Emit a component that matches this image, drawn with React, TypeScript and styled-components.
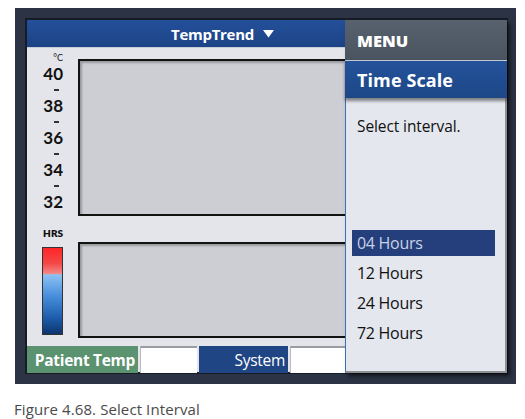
import React from 'react';
import styled, { createGlobalStyle } from 'styled-components';

const GlobalStyle = createGlobalStyle`
   html, body {
      margin: 0;
      padding: 0;
      background: #ffffff;
      font-family: "Open Sans", "Noto Sans", sans-serif;
   }
`;

const Page = styled.div`
   width: 525px;
   height: 419px;
   padding: 8px 0 0 15px;
   box-sizing: border-box;
`;

const Frame = styled.div`
   position: relative;
   width: 501px;
   height: 376px;
   box-sizing: border-box;
   padding: 10px 8px 10px 10px;
   background: #2c3344;
`;

const Screen = styled.div`
   height: 100%;
   box-sizing: border-box;
   border: 2px solid #161b26;
   background: #e3e5ea;
   display: flex;
   flex-direction: column;
`;

const Header = styled.div`
   height: 27px;
   flex-shrink: 0;
   background: linear-gradient(#24509a, #1c4386);
   display: flex;
   align-items: center;
   justify-content: center;
   padding-right: 88px;
   gap: 9px;
   color: #fff;
   font-weight: 700;
   font-size: 15px;
   letter-spacing: -0.3px;
   border-bottom: 1px solid #c8ccd6;
`;

const Body = styled.div`
   flex: 1;
   display: flex;
   flex-direction: column;
   padding-top: 6px;
   gap: 9px;
`;

const Row = styled.div`
   display: flex;
`;

const Scale = styled.div`
   width: 51px;
   flex-shrink: 0;
   box-sizing: border-box;
   padding-right: 15px;
   display: flex;
   flex-direction: column;
   align-items: flex-end;
   color: #111;
   font-family: Lato, "Open Sans", sans-serif;
   font-weight: 700;
`;

const Unit = styled.div`
   height: 10px;
   line-height: 10px;
   margin-top: -1px;
   margin-bottom: 3px;
   font-size: 9px;
   font-weight: 400;
`;

const Tick = styled.div`
   height: 16px;
   line-height: 16px;
   font-size: 17px;
   font-weight: 700;
`;

const Dash = styled.div`
   height: 16px;
   width: 14px;
   display: flex;
   align-items: center;
   justify-content: center;

   &::after {
      content: '';
      width: 5px;
      height: 1.5px;
      background: #333;
   }
`;

const HrsLabel = styled.div`
   height: 14px;
   line-height: 14px;
   font-size: 10px;
   font-weight: 800;
   margin-top: 1px;
`;

const ColorBar = styled.div`
   width: 21px;
   height: 88px;
   margin-top: 7px;
   box-sizing: border-box;
   border: 1px solid #333;
   background: linear-gradient(
      #ff2626 0%,
      #f44848 18%,
      #f48a8a 30%,
      #8ec2f4 31%,
      #4a90dc 55%,
      #1f5fae 80%,
      #0b356f 100%
   );
`;

const Chart = styled.div<{ $height: number; $top: number }>`
   flex: 1;
   height: ${(p) => p.$height}px;
   margin-top: ${(p) => p.$top}px;
   box-sizing: border-box;
   border: 2px solid #121212;
   background: #ccced4;
   box-shadow: inset 2px 2px 2px rgba(0, 0, 0, 0.25);
`;

const Footer = styled.div`
   height: 27px;
   flex-shrink: 0;
   display: flex;
   gap: 2px;
   margin-top: 8px;
`;

const Tab = styled.div<{ $bg: string; $width: number; $bold?: boolean }>`
   width: ${(p) => p.$width}px;
   box-sizing: border-box;
   background: ${(p) => p.$bg};
   color: #fff;
   font-size: 15.5px;
   font-weight: ${(p) => (p.$bold ? 700 : 400)};
   letter-spacing: -0.3px;
   display: flex;
   align-items: center;
   justify-content: flex-end;
   padding-right: 3px;
`;

const Blank = styled.div<{ $width: number }>`
   width: ${(p) => p.$width}px;
   background: #ffffff;
   border-top: 2px solid #9a9ca2;
   border-left: 1px solid #b9bbc0;
`;

const Menu = styled.div`
   position: absolute;
   left: 330px;
   top: 12px;
   width: 162px;
   height: 353px;
   display: flex;
   flex-direction: column;
   box-shadow: 3px 3px 4px rgba(0, 0, 0, 0.6);
`;

const MenuTitle = styled.div`
   height: 40px;
   flex-shrink: 0;
   box-sizing: border-box;
   padding-left: 12px;
   display: flex;
   align-items: center;
   background: linear-gradient(#58626f, #4a5461);
   color: #fff;
   font-weight: 800;
   font-size: 16.5px;
`;

const MenuSection = styled.div`
   height: 38px;
   flex-shrink: 0;
   box-sizing: border-box;
   padding-left: 12px;
   display: flex;
   align-items: center;
   border-top: 1px solid #c2c8d2;
   background: linear-gradient(#24529a, #1d4787);
   color: #fff;
   font-weight: 700;
   font-size: 18px;
   letter-spacing: 0.1px;
   box-shadow: 0 3px 3px rgba(0, 0, 0, 0.45);
   position: relative;
`;

const MenuBody = styled.div`
   flex: 1;
   box-sizing: border-box;
   background: #e4e7ee;
   border-left: 1px solid #3d6fb3;
   border-right: 2px solid #8e9096;
   border-bottom: 2px solid #8e9096;
   padding: 17px 10px 0 6px;
   color: #111;
`;

const Prompt = styled.div`
   padding-left: 5px;
   font-size: 15.5px;
   line-height: 22px;
   letter-spacing: -0.1px;
`;

const Options = styled.div`
   margin-top: 93px;
   display: flex;
   flex-direction: column;
   gap: 4px;
`;

const Option = styled.div<{ $active?: boolean }>`
   height: 26px;
   line-height: 26px;
   padding-left: 5px;
   font-size: 16px;
   letter-spacing: -0.3px;
   background: ${(p) => (p.$active ? '#243f7c' : 'transparent')};
   color: ${(p) => (p.$active ? '#c9d2e4' : '#111')};
`;

const Caption = styled.div`
   margin-top: 15px;
   margin-left: -1px;
   font-size: 15px;
   color: #4a4a4a;
   font-weight: 400;
   letter-spacing: 0.1px;
`;

const ticks = ['40', '38', '36', '34', '32'];
const intervals = ['04 Hours', '12 Hours', '24 Hours', '72 Hours'];

const App: React.FC = () => {
   return (
      <Page>
         <GlobalStyle />
         <Frame>
            <Screen>
               <Header>
                  <span>TempTrend</span>
                  <svg width="11" height="8" viewBox="0 0 11 8">
                     <path d="M0 0 H11 L5.5 7.5 Z" fill="#fff" />
                  </svg>
               </Header>
               <Body>
                  <Row>
                     <Scale>
                        <Unit>°C</Unit>
                        {ticks.map((t, i) => (
                           <React.Fragment key={t}>
                              {i > 0 && <Dash />}
                              <Tick>{t}</Tick>
                           </React.Fragment>
                        ))}
                     </Scale>
                     <Chart $height={157} $top={5} />
                  </Row>
                  <Row>
                     <Scale>
                        <HrsLabel>HRS</HrsLabel>
                        <ColorBar />
                     </Scale>
                     <Chart $height={96} $top={17} />
                  </Row>
               </Body>
               <Footer>
                  <Tab $bg="#5b9270" $width={111} $bold>
                     Patient Temp
                  </Tab>
                  <Blank $width={56} />
                  <Tab $bg="#1f4585" $width={89}>
                     System
                  </Tab>
                  <Blank $width={56} />
               </Footer>
            </Screen>
            <Menu>
               <MenuTitle>MENU</MenuTitle>
               <MenuSection>Time Scale</MenuSection>
               <MenuBody>
                  <Prompt>Select interval.</Prompt>
                  <Options>
                     {intervals.map((h, i) => (
                        <Option key={h} $active={i === 0}>
                           {h}
                        </Option>
                     ))}
                  </Options>
               </MenuBody>
            </Menu>
         </Frame>
         <Caption>Figure 4.68. Select Interval</Caption>
      </Page>
   );
};

export default App;
